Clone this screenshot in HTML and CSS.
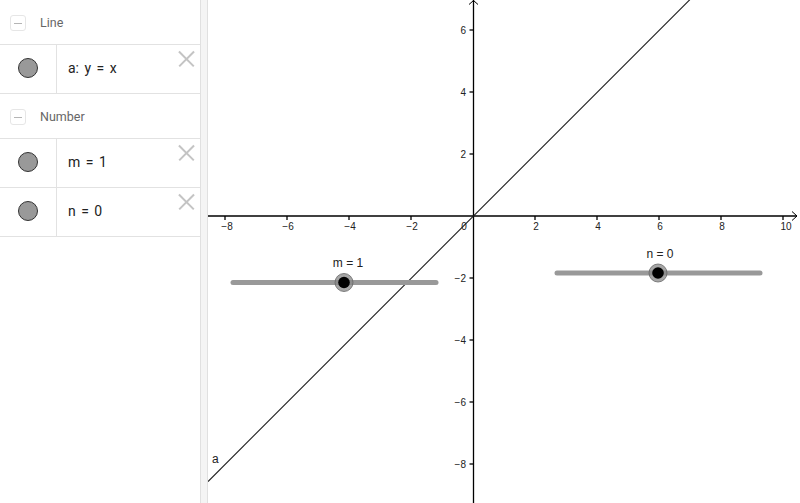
FILE: index.html
```html
<!DOCTYPE html>
<html>
<head>
<meta charset="utf-8">
<link rel="stylesheet" href="styles.css">
</head>
<body>
<div class="app">
  <div class="algebra">
    <div class="group-head">
      <span class="toggle"><span class="bar"></span></span>
      <span class="group-name">Line</span>
    </div>
    <div class="item">
      <div class="marble-cell"><span class="marble"></span></div>
      <div class="formula">a: y = x</div>
      <span class="close"></span>
    </div>
    <div class="group-head">
      <span class="toggle"><span class="bar"></span></span>
      <span class="group-name">Number</span>
    </div>
    <div class="item">
      <div class="marble-cell"><span class="marble"></span></div>
      <div class="formula">m = 1</div>
      <span class="close"></span>
    </div>
    <div class="item">
      <div class="marble-cell"><span class="marble"></span></div>
      <div class="formula">n = 0</div>
      <span class="close"></span>
    </div>
  </div>
  <div class="splitter"></div>
  <div class="graphics">
    <svg class="plot" viewBox="208 0 592 503" width="592" height="503">
      <g class="axes">
        <line x1="208" y1="216" x2="797" y2="216"/>
        <polyline class="arrow" points="792,211.5 797,216 792,220.5"/>
        <line x1="473.5" y1="0" x2="473.5" y2="503"/>
        <polyline class="arrow" points="469,4.5 473.5,0.5 478,4.5"/>
      </g>
      <g class="ticks">
        <line x1="225" y1="216" x2="225" y2="220"/>
        <line x1="287" y1="216" x2="287" y2="220"/>
        <line x1="349" y1="216" x2="349" y2="220"/>
        <line x1="411" y1="216" x2="411" y2="220"/>
        <line x1="535" y1="216" x2="535" y2="220"/>
        <line x1="597" y1="216" x2="597" y2="220"/>
        <line x1="659" y1="216" x2="659" y2="220"/>
        <line x1="721" y1="216" x2="721" y2="220"/>
        <line x1="783" y1="216" x2="783" y2="220"/>
        <line x1="469.5" y1="30" x2="473.5" y2="30"/>
        <line x1="469.5" y1="92" x2="473.5" y2="92"/>
        <line x1="469.5" y1="154" x2="473.5" y2="154"/>
        <line x1="469.5" y1="278" x2="473.5" y2="278"/>
        <line x1="469.5" y1="340" x2="473.5" y2="340"/>
        <line x1="469.5" y1="402" x2="473.5" y2="402"/>
        <line x1="469.5" y1="464" x2="473.5" y2="464"/>
      </g>
      <g class="xlabels">
        <text x="227" y="230">−8</text>
        <text x="288" y="230">−6</text>
        <text x="350" y="230">−4</text>
        <text x="412" y="230">−2</text>
        <text x="464" y="230">0</text>
        <text x="536" y="230">2</text>
        <text x="598" y="230">4</text>
        <text x="660" y="230">6</text>
        <text x="722" y="230">8</text>
        <text x="786" y="230">10</text>
      </g>
      <g class="ylabels">
        <text x="466" y="34">6</text>
        <text x="466" y="96">4</text>
        <text x="466" y="158">2</text>
        <text x="466" y="282">−2</text>
        <text x="466" y="344">−4</text>
        <text x="466" y="406">−6</text>
        <text x="466" y="468">−8</text>
      </g>
      <line class="fn" x1="208" y1="481.5" x2="700" y2="-10.5"/>
      <text class="fn-label" x="212" y="463">a</text>
      <g class="slider">
        <line class="track" x1="233" y1="282.5" x2="436" y2="282.5"/>
        <circle class="halo" cx="344" cy="282.5" r="9"/>
        <circle class="knob" cx="344" cy="282.5" r="5.8"/>
        <text class="slider-label" x="348" y="267">m = 1</text>
      </g>
      <g class="slider">
        <line class="track" x1="557" y1="273" x2="760" y2="273"/>
        <circle class="halo" cx="658" cy="273" r="9"/>
        <circle class="knob" cx="658" cy="273" r="5.8"/>
        <text class="slider-label" x="660" y="258">n = 0</text>
      </g>
    </svg>
  </div>
</div>
</body>
</html>
```

FILE: styles.css
```css
html, body {
  margin: 0;
  padding: 0;
  background: #ffffff;
}

.app {
  display: flex;
  width: 800px;
  height: 503px;
  overflow: hidden;
  font-family: Roboto, "Liberation Sans", sans-serif;
}

.algebra {
  width: 200px;
  flex: none;
  display: flex;
  flex-direction: column;
}

.group-head {
  height: 44px;
  border-bottom: 1px solid #e2e2e2;
  display: flex;
  align-items: center;
  padding-left: 10px;
  box-sizing: content-box;
}

.toggle {
  width: 14px;
  height: 14px;
  border: 1px solid #e6e6e6;
  border-radius: 3px;
  display: flex;
  align-items: center;
  justify-content: center;
  margin-top: 2px;
}

.toggle .bar {
  width: 8px;
  height: 1px;
  background: #b5b5b5;
}

.group-name {
  margin-left: 14px;
  font-size: 12.5px;
  color: #666666;
  margin-top: 1px;
}

.item {
  height: 48px;
  border-bottom: 1px solid #e2e2e2;
  display: flex;
  position: relative;
}

.marble-cell {
  width: 56px;
  border-right: 1px solid #e2e2e2;
  display: flex;
  align-items: center;
  justify-content: center;
}

.marble {
  width: 18px;
  height: 18px;
  border-radius: 50%;
  background: #999999;
  border: 1px solid #333333;
  margin-top: -2px;
}

.formula {
  display: flex;
  align-items: center;
  padding-left: 11px;
  font-size: 14px;
  color: #222222;
  margin-top: -2px;
  word-spacing: 2px;
}

.close {
  position: absolute;
  left: 178px;
  top: 6px;
  width: 16px;
  height: 16px;
}

.close::before, .close::after {
  content: "";
  position: absolute;
  left: -2px;
  top: 7px;
  width: 21px;
  height: 1.6px;
  background: #c4c4c4;
  transform: rotate(45deg);
}

.close::after {
  transform: rotate(-45deg);
}

.splitter {
  width: 6px;
  flex: none;
  background: #f4f4f4;
  border-left: 1px solid #e0e0e0;
  border-right: 1px solid #e0e0e0;
}

.graphics {
  flex: 1;
  position: relative;
  background: #ffffff;
}

.plot {
  display: block;
}

.axes line, .ticks line {
  stroke: #000000;
  stroke-width: 1.3;
}

.axes .arrow {
  fill: none;
  stroke: #000000;
  stroke-width: 1;
}

.xlabels text, .ylabels text {
  font-family: "Liberation Sans", Arial, sans-serif;
  font-size: 10px;
  fill: #222222;
}

.xlabels text {
  text-anchor: middle;
}

.ylabels text {
  text-anchor: end;
}

.fn {
  stroke: #1a1a1a;
  stroke-width: 1.1;
}

.fn-label {
  font-family: "Liberation Sans", Arial, sans-serif;
  font-size: 12px;
  fill: #222222;
}

.track {
  stroke: #999999;
  stroke-width: 5;
  stroke-linecap: round;
}

.halo {
  fill: #888888;
  fill-opacity: 0.75;
  stroke: #666666;
  stroke-width: 0.8;
}

.knob {
  fill: #000000;
}

.slider-label {
  font-family: "Liberation Sans", Arial, sans-serif;
  font-size: 12px;
  fill: #222222;
  text-anchor: middle;
}
```
